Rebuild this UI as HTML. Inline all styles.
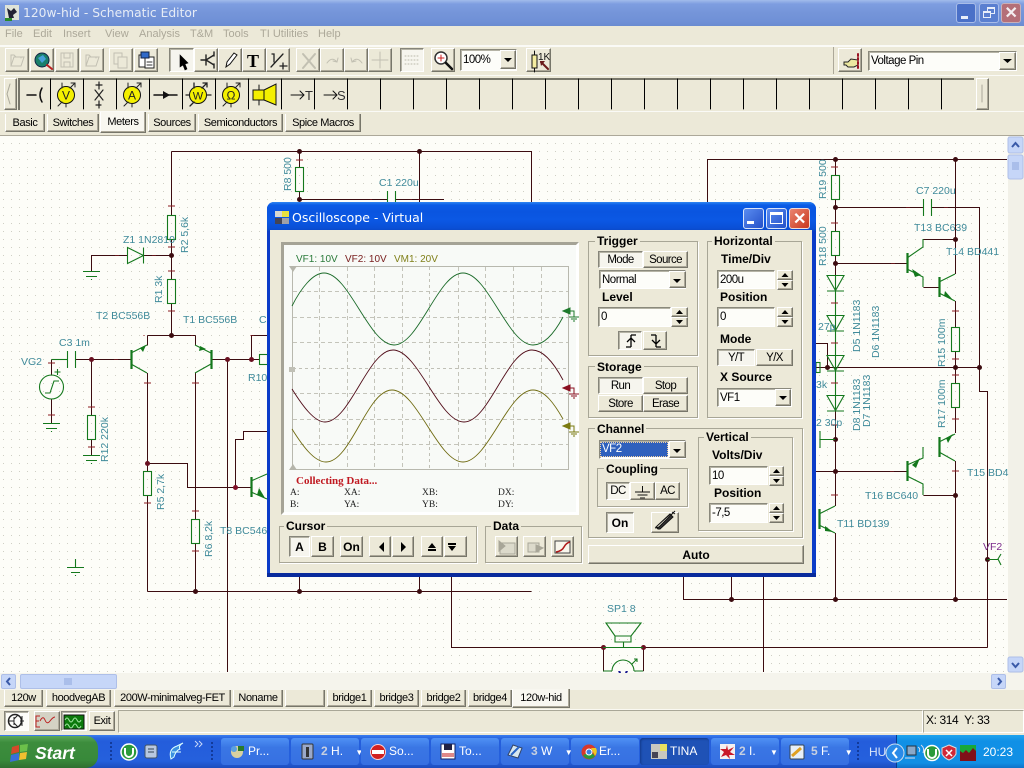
<!DOCTYPE html>
<html><head><meta charset="utf-8"><title>120w-hid - Schematic Editor</title>
<style>
html,body{margin:0;padding:0;width:1024px;height:768px;overflow:hidden;background:#ece9d8}
body{position:relative;font:11px "Liberation Sans",sans-serif;color:#000}
div,svg{position:absolute;box-sizing:border-box}
.t{white-space:nowrap;line-height:13px}
.r,.s,.i,.g{display:flex;align-items:center;justify-content:center;white-space:nowrap;background:#ece9d8;letter-spacing:-.4px}
.r{border:1px solid;border-color:#fff #77766a #77766a #fff;box-shadow:inset -1px -1px 0 #aca899}
.s{border:1px solid;border-color:#86857a #fff #fff #86857a;background:#f6f5ee;box-shadow:inset 1px 1px 0 #b5b3a5}
.i{border:1px solid;border-color:#8a897c #fff #fff #8a897c;background:#fdfdf9;box-shadow:inset 1px 1px 0 #b5b3a5;justify-content:flex-start;padding-left:2px;font-size:11.5px;letter-spacing:-.5px}
.g{border:1px solid #a8a696;box-shadow:1px 1px 0 #fff;background:transparent}
.b{font-weight:bold;font-size:12px;letter-spacing:0}
.tl{background:#ece9d8;padding:0 2px;font-weight:bold;font-size:12px;line-height:13px;white-space:nowrap}
.m{color:#aca899;top:28px}
.w{color:#fff;font-size:12px}
.n{font-size:11.500px;letter-spacing:-.6px}
.task{top:738px;height:27px;background:linear-gradient(#4f91f5,#3a76e4 35%,#3670e2);border-radius:3px;color:#fff;font-size:12px;line-height:27px;white-space:nowrap}
</style></head><body>

<!-- main title bar -->
<div style="left:0;top:0;width:1024px;height:26px;background:linear-gradient(#a2bceb 0,#7e9de0 4px,#7595d9 13px,#6f90d6 22px,#6a8bd0 26px)"></div>
<div class="t" style="left:23px;top:5px;color:#e6ecf6;font:12.3px/16px 'DejaVu Sans',sans-serif">120w-hid - Schematic Editor</div>
<svg style="left:4px;top:4px" width="16" height="18"><rect x="1" y="1" width="14" height="15" fill="#dfe3d8"/><path d="M3 4l4 3 3-3 3 4-4 3 1 3H5l-1-5z" fill="#223"/><rect x="1" y="14" width="7" height="3" fill="#2a8a2a"/></svg>
<div style="left:956px;top:3px;width:20px;height:20px;border:1px solid #a8bce8;border-radius:3px;background:#4a70c8"><div style="left:4px;top:12px;width:7px;height:3px;background:#e8eefa"></div></div>
<div style="left:979px;top:3px;width:20px;height:20px;border:1px solid #a8bce8;border-radius:3px;background:#5a7fd0"><div style="left:7px;top:3px;width:8px;height:7px;border:1px solid #e8eefa;border-top-width:2px"></div><div style="left:3px;top:7px;width:8px;height:7px;border:1px solid #e8eefa;border-top-width:2px;background:#5a7fd0"></div></div>
<div class="r" style="left:1001px;top:3px;width:20px;height:20px;border:1px solid #c8b0b8;border-radius:3px;background:#b46f78;color:#f4eef0;font:bold 16px 'Liberation Sans';box-shadow:none">✕</div>

<!-- menu -->
<div class="t m" style="left:5px">File</div><div class="t m" style="left:33px">Edit</div><div class="t m" style="left:63px">Insert</div><div class="t m" style="left:105px">View</div><div class="t m" style="left:139px">Analysis</div><div class="t m" style="left:190px">T&amp;M</div><div class="t m" style="left:223px">Tools</div><div class="t m" style="left:260px">TI Utilities</div><div class="t m" style="left:318px">Help</div>
<div style="left:0;top:45px;width:1024px;height:2px;background:#fafaf6"></div>

<!-- toolbar 1 -->
<div class="r" style="left:5px;top:48px;width:24px;height:24px"></div><div class="r" style="left:30px;top:48px;width:24px;height:24px"></div><div class="r" style="left:55px;top:48px;width:24px;height:24px"></div><div class="r" style="left:80px;top:48px;width:24px;height:24px"></div>
<div class="r" style="left:109px;top:48px;width:24px;height:24px"></div><div class="r" style="left:134px;top:48px;width:24px;height:24px"></div>
<div class="s" style="left:169px;top:48px;width:25px;height:24px"></div><div class="r" style="left:194px;top:48px;width:24px;height:24px"></div><div class="r" style="left:218px;top:48px;width:24px;height:24px"></div><div class="r" style="left:242px;top:48px;width:24px;height:24px"></div><div class="r" style="left:266px;top:48px;width:24px;height:24px"></div>
<div class="r" style="left:296px;top:48px;width:24px;height:24px"></div><div class="r" style="left:320px;top:48px;width:24px;height:24px"></div><div class="r" style="left:344px;top:48px;width:24px;height:24px"></div><div class="r" style="left:368px;top:48px;width:24px;height:24px"></div>
<div class="s" style="left:400px;top:48px;width:24px;height:24px"></div><div class="r" style="left:431px;top:48px;width:24px;height:24px"></div>
<div class="i" style="left:460px;top:49px;width:57px;height:22px">100%</div><div class="r" style="left:500px;top:50px;width:16px;height:19px"></div>
<div class="r" style="left:526px;top:48px;width:25px;height:24px"></div>
<div style="left:833px;top:47px;width:1px;height:27px;background:#aca899"></div>
<div class="r" style="left:838px;top:48px;width:24px;height:24px"></div>
<div class="i" style="left:868px;top:51px;width:149px;height:20px">Voltage Pin</div><div class="r" style="left:999px;top:52px;width:17px;height:18px"></div>
<div style="left:0;top:75px;width:1024px;height:1px;background:#fafaf6"></div>

<!-- toolbar 2 -->
<div class="r" style="left:4px;top:78px;width:13px;height:32px"></div>
<div style="left:18px;top:78px;width:956px;height:2px;background:#77766a"></div>
<div style="left:18px;top:78px;width:2px;height:32px;background:#77766a"></div>
<div style="left:0;top:111px;width:1024px;height:1px;background:#fafaf6"></div>
<div class="r" style="left:976px;top:78px;width:13px;height:32px"></div>

<svg style="left:0;top:0" width="1024" height="135" fill="none" stroke-linecap="round">
<!-- toolbar 2 dividers -->
<path stroke="#000" d="M50.5 79v30M83.5 79v30M116.5 79v30M149.5 79v30M182.5 79v30M215.5 79v30M248.5 79v30M281.5 79v30M314.5 79v30M347.5 79v30M380.5 79v30M413.5 79v30M446.5 79v30M479.5 79v30M512.5 79v30M545.5 79v30M578.5 79v30M611.5 79v30M644.5 79v30M677.5 79v30M710.5 79v30M743.5 79v30M776.5 79v30M809.5 79v30M842.5 79v30M875.5 79v30M908.5 79v30M941.5 79v30"/>
<path stroke="#aaa89a" d="M10 84l-3 10 3 10M982 85v17"/>
<!-- toolbar 1 icons -->
<g stroke="#c2c0b2"><path d="M11 66l3-9h10l-3 9H11zM11 66v-11h3l2 2h5v1"/><rect x="61" y="53" width="12" height="14"/><path d="M64 53v5h6v-5M64 67v-5h6v5"/><path d="M86 66l3-9h10l-3 9H86zM86 66V55h3l2 2h5v1"/><rect x="114" y="53" width="8" height="11"/><rect x="118" y="57" width="9" height="11" fill="#ece9d8"/><path d="M303 54l12 14M315 54l-12 14" stroke-width="2"/><path d="M327 63q5-7 10-1M333 61l4 1 1-4M362 63q-5-7-10-1M356 61l-4 1-1-4M380 52v16M372 60h16"/></g>
<circle cx="42" cy="60" r="7" fill="#1a7f6a" stroke="#124"/><path d="M38 58l5-3 3 4-4 4z" fill="#46a0d8"/><path d="M47 65l5 4" stroke="#b22" stroke-width="2"/>
<rect x="139" y="55" width="10" height="12" fill="#fff" stroke="#222"/><rect x="145" y="57" width="9" height="11" fill="#fff" stroke="#222"/><path d="M141 52h8v6h-8z" fill="#2f69c8" stroke="#124"/><path d="M147 62h5M147 65h5" stroke="#333"/>
<path d="M179 55l8 8-3 1 2 5-2 1-2-5-3 2z" fill="#000" stroke="#000" stroke-width=".6" transform="translate(1,0)"/>
<path d="M201 60h5M206 55v10M214 55l-8 5 8 5M214 52v4M214 64v4" stroke="#222" stroke-width="1.4"/>
<path d="M226 67l1-5 7-9 3 2-7 9z" stroke="#111" fill="#fff"/>
<text x="247" y="67" fill="#000" stroke="none" font-family="Liberation Serif,serif" font-weight="bold" font-size="18">T</text>
<path d="M271 67l12-13M272 54h2v8M280 66h7M283 63v6" stroke="#222" stroke-width="1.3"/>
<g stroke="#bbb9ab"><path d="M405 56h14M405 60h14M405 64h14" stroke-dasharray="1 2"/></g>
<circle cx="441" cy="58" r="6" fill="#fff" stroke="#333" stroke-width="1.5"/><path d="M438 58h6M441 55v6" stroke="#c22"/><path d="M446 63l6 6" stroke="#111" stroke-width="2.5"/>
<polygon points="504,58 512,58 508,62" fill="#000"/><polygon points="1003,59 1012,59 1007.5,63" fill="#000"/>
<rect x="532" y="55" width="5" height="13" fill="#f4eda0" stroke="#111"/><path d="M534.5 51v4M534.5 68v4" stroke="#111"/>
<text x="538" y="60" fill="#111" stroke="none" font-size="10" font-family="Liberation Sans">1K</text>
<path d="M541 62l7 7" stroke="#6a1a1a" stroke-width="2"/><polygon points="540,61 545,61 541,66" fill="#6a1a1a"/>
<path d="M844 62h4l3-3 7 1v5l-4 2h-6l-2-2h-2z" stroke="#222" fill="#ece8a0"/><path d="M858 54v14" stroke="#912" stroke-width="2" stroke-dasharray="2 2"/>
<!-- meters toolbar -->
<path stroke="#111" stroke-width="1.5" d="M27 95h9M42 88q-4 7 0 14"/>
<circle cx="66" cy="95" r="8.5" fill="#f4f000" stroke="#111"/><path d="M58 106l4-4M70 88l5-5M71 83h4v4M62 83v5M66 104v3" stroke="#222"/>
<text x="66" y="99.500" text-anchor="middle" font-size="12" fill="#222" stroke="none">V</text>
<path d="M99 82v7M95 90l8 10M103 90l-8 10M99 101v7M96 85h6M96 105h5" stroke="#222" stroke-width="1.2"/>
<circle cx="132" cy="95" r="8.5" fill="#f4f000" stroke="#111"/><path d="M124 106l4-4M136 88l5-5M137 83h4v4M128 83v5M132 104v3" stroke="#222"/>
<text x="132" y="99.500" text-anchor="middle" font-size="12" fill="#222" stroke="none">A</text>
<path d="M154 95h23" stroke="#111" stroke-width="1.5"/><polygon points="163,91 170,95 163,99" fill="#111"/>
<circle cx="198" cy="95" r="8.5" fill="#f4f000" stroke="#111"/><path d="M186 95h3M207 95h4M190 106l4-4M202 88l5-5M203 83h4v4M194 83v5" stroke="#222" stroke-width="1.3"/>
<text x="198" y="99.500" text-anchor="middle" font-size="11" fill="#222" stroke="none">W</text>
<circle cx="231" cy="95" r="8.5" fill="#f4f000" stroke="#111"/><path d="M223 106l4-4M235 88l5-5M236 83h4v4M227 83v5M231 104v3" stroke="#222"/>
<text x="231" y="99.500" text-anchor="middle" font-size="12" fill="#222" stroke="none">Ω</text>
<rect x="253" y="90" width="11" height="10" fill="#f4f000" stroke="#111"/><path d="M264 90l12-6v21l-12-5zM259 85v5M259 100v5" fill="#f4f000" stroke="#111"/>
<path d="M291 95h13M300 91l4 4-4 4M324 95h13M333 91l4 4-4 4" stroke="#111"/>
<text x="305" y="100" font-size="13" fill="#333" stroke="none" font-family="Liberation Sans">T</text>
<text x="337" y="100" font-size="13" fill="#333" stroke="none" font-family="Liberation Sans">S</text>
</svg>

<!-- component tabs -->
<div class="r" style="left:5px;top:114px;width:40px;height:18px;border-top:0">Basic</div>
<div class="r" style="left:47px;top:114px;width:52px;height:18px;border-top:0">Switches</div>
<div class="r" style="left:100px;top:112px;width:46px;height:21px;background:#f8f7f0;border-top:0">Meters</div>
<div class="r" style="left:148px;top:114px;width:48px;height:18px;border-top:0">Sources</div>
<div class="r" style="left:198px;top:114px;width:85px;height:18px;border-top:0">Semiconductors</div>
<div class="r" style="left:285px;top:114px;width:76px;height:18px;border-top:0">Spice Macros</div>

<!-- canvas -->
<svg style="left:0;top:135px" width="1024" height="538" viewBox="0 135 1024 538" font-family="Liberation Sans" font-size="10.5" fill="none">
<defs><pattern id="d" x="3" y="7" width="8" height="8" patternUnits="userSpaceOnUse"><rect width="8" height="8" fill="#fdfdf8"/><rect width="1" height="1" fill="#cfcfc4"/></pattern></defs>
<rect x="0" y="135" width="1008" height="538" fill="url(#d)"/>
<rect x="1008" y="135" width="16" height="538" fill="#f2f1e8"/>
<rect x="0" y="135" width="1024" height="1" fill="#aca899"/>
<!-- wires -->
<g stroke="#3c0c10" stroke-width="1">
<path d="M171.5 151.5H531.5V202M299.5 151.5V167M419.5 151.5V202M299.5 192V199.5H387M395 199.5H444"/>
<path d="M171.5 151.5V215M171.5 240V279M171.5 303V335.5M91.5 271V255.5H127M143 255.5H171.5M147.5 335.5H195.5M147.5 335.5v10M195.5 335.5v10"/>
<path d="M147.5 373V471M147.5 496V591.5M195.5 373V519M195.5 543V591.5M147.5 591.5H531.5M299.5 577V591.5M419.5 577V591.5"/>
<path d="M75 359.5H131M91.5 359.5V415M91.5 439V455M51.5 399V423M51.5 359.5V375"/>
<path d="M211 359.5H259M251.5 359.5V335.5H267M227.5 359.5V672M147.5 463.5H187.5V487.5H251M235.5 487.5V439.5H243.5V431.5H267"/>
<path d="M451.5 577V647.5H603M643 647.5H987.5M763.5 577V672M683.5 577V599.5H1007M731.5 577V599.5"/>
<path d="M707.5 202V159.5H1007M835.5 159.5V175M835.5 199V231M835.5 255V275M835.5 263.5H907M835.5 207.5H923M931 207.5H979.5V391.5H987.5V647.5M923.5 239.5H955.5M955.5 159.5V274M955.5 301V327M955.5 351.5V383M923.5 287.5H939M816 367.5H979.5M827.5 367.5V343.5H816M816 471.5H907M835.5 411V506M835.5 533V599.5M923.5 495.5H955.5M955.5 461V599.5M955.5 407V433"/>
<path d="M603.5 647.5V671M643.5 647.5V671"/>
</g>
<!-- nodes -->
<g fill="#3c0c10">
<circle cx="299.5" cy="151.5" r="2.5"/><circle cx="419.5" cy="151.5" r="2.5"/><circle cx="299.5" cy="199.5" r="2.5"/><circle cx="171.5" cy="255.5" r="2.5"/><circle cx="171.5" cy="335.5" r="2.5"/><circle cx="91.5" cy="359.5" r="2.5" fill="#6a1020"/><circle cx="227.5" cy="359.5" r="2.5" fill="#6a1020"/><circle cx="251.5" cy="359.5" r="2.5" fill="#6a1020"/><circle cx="147.5" cy="463.5" r="2.5" fill="#6a1020"/><circle cx="235.5" cy="487.5" r="2.5" fill="#801028"/><circle cx="195.5" cy="591.5" r="2.5"/><circle cx="299.5" cy="591.5" r="2.5"/><circle cx="419.5" cy="591.5" r="2.5"/><circle cx="603.5" cy="647.5" r="2.5" fill="#6a1020"/><circle cx="643.5" cy="647.5" r="2.5" fill="#6a1020"/><circle cx="731.5" cy="599.5" r="2.5"/>
<circle cx="835.5" cy="159.5" r="2.5"/><circle cx="955.5" cy="159.5" r="2.5"/><circle cx="835.5" cy="207.5" r="2.5"/><circle cx="835.5" cy="263.5" r="2.5"/><circle cx="955.5" cy="239.5" r="2.5"/><circle cx="955.5" cy="367.5" r="2.5"/><circle cx="979.5" cy="367.5" r="2.5"/><circle cx="827.5" cy="367.5" r="2.5"/><circle cx="835.5" cy="439.5" r="2.5"/><circle cx="835.5" cy="471.5" r="2.5"/><circle cx="955.5" cy="495.5" r="2.5"/><circle cx="955.5" cy="599.5" r="2.5"/><circle cx="835.5" cy="599.5" r="2.5"/><circle cx="987.5" cy="559.5" r="2.5"/>
</g>
<!-- components -->
<g stroke="#14781c" stroke-width="1.1">
<rect x="295.5" y="167.5" width="8" height="24"/><rect x="167.5" y="215.5" width="8" height="24"/><rect x="167.5" y="279.5" width="8" height="24"/><rect x="87.5" y="415.5" width="8" height="24"/><rect x="143.5" y="471.5" width="8" height="24"/><rect x="191.5" y="519.5" width="8" height="24"/>
<rect x="831.5" y="175.5" width="8" height="24"/><rect x="831.5" y="231.5" width="8" height="24"/><rect x="951.5" y="327.5" width="8" height="24"/><rect x="951.5" y="383.5" width="8" height="24"/><rect x="816" y="362.5" width="4" height="10"/><rect x="259.5" y="354.5" width="8" height="10"/>
<path d="M387.5 191v11M395.5 191v11M67.5 351v17M75.5 351v17M923.5 199v17M931.5 199v17"/>
<path d="M51.5 359.5H67"/>
<path d="M127.5 247.5V263.5L143.5 255.5ZM143.5 247.5V263.5"/>
<path d="M83 271.5h17M86 276.5h11M91.5 279v1M43 423.5h17M46 428.5h11M51.5 431v1M83 455.5h17M86 460.5h11M91.5 463v1M67 567.5h17M71 572.5h9M75.5 559v8M75.5 575v1"/>
<circle cx="51.5" cy="387" r="12"/><path d="M45 393h5l4-12h5"/><path d="M57.500 369v6M54.500 372h6"/>
<path d="M131.5 350v19M211.5 350v19M251.5 477v20M907.5 253v20M939.5 277v20M939.5 437v20M907.5 461v20M819.5 509v20" stroke-width="2.2"/>
<path d="M131 353l16-8M131 364l16 9M211 353l-16-8M211 364l-16 9M251 481l16-7M251 492l16 7M907 258l16-11v-8M907 269l16 8v10M939 282l16-8M939 293l16 8M939 442l16-8M939 452l16 9M923 447v11l-16 7M907 476l16 8v11M819 514l16-8M819 525l16 8"/>
<path d="M827 275.5h17l-8.5 15zM827 291h17M827 315.5h17l-8.5 15zM827 331h17M827 355.5h17l-8.5 15zM827 371h17M827 395.5h17l-8.5 15zM827 411h17"/>
<path d="M835.5 275v135M820 439.5h15M820 431v17"/>
<path d="M606 623h35l-10 13h-16zM615 636h16v6h-16zM623.5 642v5M603 647.5h40M603 671h9M634 671h9M612 671a11 11 0 0 1 22 0M632 664l5-5M634 659h3v3M987.5 559.5H998M1001 554l-3 5 3 6"/>
</g>
<g fill="#14781c"><polygon points="140,348 146,345 143,352"/><polygon points="200,346 206,349 199,351"/><polygon points="257,495 265,498 259,488"/><polygon points="912,269 921,275 915,277"/><polygon points="945,291 953,300 944,296"/><polygon points="912,465 920,458 916,468"/><polygon points="946,438 953,434 948,443"/><polygon points="825,526 833,532 825,531"/></g>
<!-- ticks -->
<g stroke="#8a1a20" stroke-width="1"><path d="M116 255v1M118 255v1M153 255v1M155 255v1M115 359v1M117 359v1M168 206h7M168 247h7M168 271h7M168 311h7M88 407h7M88 447h7M144 503h7M192 511h7M192 551h7M144 335v1M192 335v1M296 160h7M419 199v1M371 199v1M411 199v1M48 363h7M48 415h7M144 383h7M192 383h7M831 167h7M831 223h7M831 303h7M831 343h7M831 383h7M831 425h7M831 495h7M952 359h7M952 375h7M952 419h7M952 471h7M952 311h7M892 263v1M894 263v1M891 471v1M893 471v1M907 207v1M909 207v1M945 207v1M947 207v1M251 335v1M253 335v1M268 431v1"/></g>
<!-- labels -->
<g fill="#3f8a9a" stroke="none">
<text x="123" y="243">Z1 1N2810</text><text x="96" y="319">T2 BC556B</text><text x="183" y="323">T1 BC556B</text><text x="59" y="346">C3 1m</text><text x="21" y="365">VG2</text><text x="248" y="381">R10</text><text x="259" y="323">C</text><text x="220" y="534">T8 BC546</text><text x="379" y="186">C1 220u</text><text x="607" y="612">SP1 8</text>
<text x="916" y="194">C7 220u</text><text x="914" y="231">T13 BC639</text><text x="946" y="255">T14 BD441</text><text x="967" y="476">T15 BD4</text><text x="865" y="499">T16 BC640</text><text x="837" y="527">T11 BD139</text><text x="818" y="330">27p</text><text x="816" y="388">3k</text><text x="816" y="426">2 30p</text>
<text transform="translate(188 253) rotate(-90)">R2 5,6k</text><text transform="translate(162 303) rotate(-90)">R1 3k</text><text transform="translate(108 462) rotate(-90)">R12 220k</text><text transform="translate(164 510) rotate(-90)">R5 2,7k</text><text transform="translate(212 557) rotate(-90)">R6 8,2k</text><text transform="translate(291 191) rotate(-90)">R8 500</text>
<text transform="translate(826 199) rotate(-90)">R19 500</text><text transform="translate(826 266) rotate(-90)">R18 500</text><text transform="translate(860 352) rotate(-90)">D5 1N1183</text><text transform="translate(879 358) rotate(-90)">D6 1N1183</text><text transform="translate(860 431) rotate(-90)">D8 1N1183</text><text transform="translate(870 427) rotate(-90)">D7 1N1183</text><text transform="translate(945 367) rotate(-90)">R15 100m</text><text transform="translate(945 428) rotate(-90)">R17 100m</text>
</g>
<text x="983" y="550" fill="#7a2a8a">VF2</text>
<text x="623" y="681" text-anchor="middle" fill="#1a1a90" font-weight="bold" font-size="15">V</text>
<!-- scrollbar -->
<rect x="1008" y="137" width="15" height="16" rx="2" fill="#c6d6f8" stroke="#aebfe8"/><path d="M1012 147l3.5-4 3.5 4" stroke="#3a5aa8" stroke-width="2"/>
<rect x="1008" y="155" width="15" height="24" rx="2" fill="#c6d6f8" stroke="#aebfe8"/><path d="M1012 163h7M1012 165h7M1012 167h7M1012 169h7" stroke="#8ea6dc"/>
<rect x="1008" y="657" width="15" height="15" rx="2" fill="#c6d6f8" stroke="#aebfe8"/><path d="M1012 663l3.5 4 3.5-4" stroke="#3a5aa8" stroke-width="2"/>
</svg>

<!-- horizontal scrollbar -->
<div style="left:0;top:673px;width:1024px;height:17px;background:#f5f4ec"></div>
<div style="left:1px;top:674px;width:15px;height:15px;background:#c6d6f8;border:1px solid #aebfe8;border-radius:2px"></div>
<div style="left:20px;top:674px;width:97px;height:15px;background:#c6d6f8;border:1px solid #aebfe8;border-radius:2px"></div>
<div style="left:991px;top:674px;width:15px;height:15px;background:#c6d6f8;border:1px solid #aebfe8;border-radius:2px"></div>
<svg style="left:0;top:673px" width="1024" height="17" fill="none"><path d="M10 5l-3 3.5 3 3.5M998 5l3 3.5-3 3.5" stroke="#3a5aa8" stroke-width="2"/><path d="M65 5v7M67 5v7M69 5v7M71 5v7" stroke="#8ea6dc"/></svg>

<!-- document tabs -->
<div class="r" style="left:4px;top:690px;width:39px;height:17px;border-top:0">120w</div>
<div class="r" style="left:46px;top:690px;width:65px;height:17px;border-top:0">hoodvegAB</div>
<div class="r" style="left:114px;top:690px;width:117px;height:17px;border-top:0">200W-minimalveg-FET</div>
<div class="r" style="left:233px;top:690px;width:50px;height:17px;border-top:0">Noname</div>
<div class="r" style="left:285px;top:690px;width:40px;height:17px;border-top:0"></div>
<div class="r" style="left:327px;top:690px;width:45px;height:17px;border-top:0">bridge1</div>
<div class="r" style="left:374px;top:690px;width:45px;height:17px;border-top:0">bridge3</div>
<div class="r" style="left:421px;top:690px;width:45px;height:17px;border-top:0">bridge2</div>
<div class="r" style="left:468px;top:690px;width:44px;height:17px;border-top:0">bridge4</div>
<div class="r" style="left:512px;top:689px;width:58px;height:19px;border-top:0;background:#f8f7f0">120w-hid</div>
<div style="left:0;top:709px;width:1024px;height:1px;background:#faf9f2"></div>

<!-- bottom bar -->
<div class="s" style="left:4px;top:711px;width:25px;height:20px;background:#fdfdf9"></div>
<div class="r" style="left:34px;top:711px;width:26px;height:20px;background:#d4d2c4"></div>
<div class="s" style="left:61px;top:711px;width:26px;height:20px;background:#fdfdf9"></div>
<div class="r" style="left:89px;top:711px;width:26px;height:20px">Exit</div>
<div style="left:118px;top:710px;width:805px;height:23px;border:1px solid;border-color:#a9a797 #fff #fff #a9a797"></div>
<div style="left:923px;top:710px;width:101px;height:23px;border:1px solid;border-color:#a9a797 #fff #fff #a9a797"></div>
<div class="t" style="left:926px;top:714px;font-size:12px;letter-spacing:-.4px">X: 314 &nbsp;Y: 33</div>
<svg style="left:0;top:706px" width="120" height="30" fill="none">
<circle cx="15" cy="15" r="6.5" stroke="#222" stroke-width="1.5"/><path d="M9 15h5M14 11v8M14 13l4-4M14 17l4 4M22 10v10M20 15h4" stroke="#222"/>
<path d="M40 10h-4v11h4M36 15h3M40 15q3-6 5-1t5 1 5-4" stroke="#b22"/>
<rect x="64" y="9" width="20" height="14" fill="#0c7a0c" stroke="#111"/><path d="M65 14q2-4 4 0t4 0 4 0 4 0M65 20q2-4 4 0t4 0 4 0 4 0" stroke="#9ee29e"/>
</svg>

<!-- taskbar -->
<div style="left:0;top:735px;width:1024px;height:33px;background:linear-gradient(#3a7ef0 0,#2a66e0 3px,#245ddb 6px,#2560dd 26px,#1d4dbd 33px)"></div>
<div style="left:896px;top:735px;width:128px;height:33px;background:linear-gradient(#20a4ee,#1090e6 6px,#118fe4 28px,#0f72c8);border-left:1px solid #083a90"></div>
<div style="left:0;top:736px;width:98px;height:32px;background:linear-gradient(#5aa85a,#3d8d3d 20%,#38893a 75%,#2f6f30);border-radius:0 12px 12px 0"></div>
<div class="t" style="left:35px;top:743px;color:#fff;font:italic bold 17.500px/20px 'Liberation Sans'">Start</div>
<svg style="left:0;top:735px" width="1024" height="33" fill="none">
<path d="M12 12l7-2v7l-8 2z" fill="#d64a2a"/><path d="M20 10l8-1-1 7-7 1z" fill="#6cc04a"/><path d="M11 20l8-2v7l-9 2z" fill="#3a6fd8"/><path d="M20 18l7-1-1 7-7 1z" fill="#f0c030"/>
<path d="M111 7v20M212 7v20M858 7v20" stroke="#123a9a" stroke-width="2" stroke-dasharray="2 2"/>
<circle cx="129" cy="17" r="8" fill="#2a9a3a" stroke="#fff" stroke-width="1.5"/><path d="M125 13v5a4 4 0 0 0 8 0v-5" stroke="#fff" stroke-width="2"/>
<rect x="145" y="10" width="12" height="13" rx="2" fill="#b8c8e0" stroke="#456"/><path d="M148 14h6M148 17h6" stroke="#345"/>
<path d="M171 24q-3-10 6-13 4-2 6-3-5 3-3 6l-2 1q-3 3-4 7zM172 17h9" stroke="#dff" fill="#3a90e0"/>
<path d="M195 6l3 3-3 3M199 6l3 3-3 3" stroke="#c8d8f8"/>
<circle cx="895" cy="18" r="9" fill="#2a8ae8" stroke="#cde" stroke-width="1"/><path d="M897 13l-4 5 4 5" stroke="#fff" stroke-width="2"/>
<rect x="907" y="11" width="9" height="9" fill="#8aa8c8" stroke="#234"/><path d="M905 23h10M918 12q3 2 1 5M921 10q4 3 2 8" stroke="#dde"/>
<circle cx="932" cy="18" r="7.5" fill="#2a9a3a" stroke="#fff" stroke-width="1.5"/><path d="M928 14v5a4 4 0 0 0 8 0v-5" stroke="#fff" stroke-width="2"/>
<path d="M949 10l7 3v6q-2 4-7 6-5-2-7-6v-6z" fill="#d02838" stroke="#ddd"/><path d="M946 15l6 6M952 15l-6 6" stroke="#fff" stroke-width="1.5"/>
<rect x="960" y="10" width="16" height="16" fill="#801018"/><path d="M960 10h16v6l-3-3-4 5-3-3-3 3-3-2z" fill="#18a838"/>
</svg>
<div class="task" style="left:221px;width:68px;padding-left:27px">Pr...</div>
<div class="task" style="left:291px;width:68px;padding-left:30px"><b style="color:#c8d0e0">2</b> H. <span style="font-size:8px;margin-left:9px">▼</span></div>
<div class="task" style="left:361px;width:68px;padding-left:28px">So...</div>
<div class="task" style="left:431px;width:68px;padding-left:28px">To...</div>
<div class="task" style="left:501px;width:68px;padding-left:30px"><b style="color:#c8d0e0">3</b> W <span style="font-size:8px;margin-left:9px">▼</span></div>
<div class="task" style="left:571px;width:68px;padding-left:28px">Er...</div>
<div class="task" style="left:640px;width:69px;padding-left:30px;background:#1f52b6;box-shadow:inset 1px 1px 2px #123a8a">TINA</div>
<div class="task" style="left:711px;width:68px;padding-left:28px"><b style="color:#c8d0e0">2</b> I. <span style="font-size:8px;margin-left:11px">▼</span></div>
<div class="task" style="left:781px;width:68px;padding-left:30px"><b style="color:#c8d0e0">5</b> F. <span style="font-size:8px;margin-left:11px">▼</span></div>
<svg style="left:0;top:735px;z-index:5" width="1024" height="33" fill="none">
<circle cx="237" cy="17" r="6" fill="#d8d0a0"/><rect x="238" y="11" width="6" height="5" fill="#2a7a2a"/><circle cx="234" cy="14" r="3" fill="#5aa0e0"/>
<rect x="302" y="9" width="11" height="15" rx="1" fill="#9aa8c8" stroke="#333"/><path d="M306 12h3v10h-3z" fill="#333"/>
<circle cx="378" cy="17" r="7.5" fill="#d02020" stroke="#ffd0d0"/><rect x="372" y="15" width="12" height="4" fill="#fff"/>
<rect x="441" y="9" width="14" height="15" fill="#fff" stroke="#126"/><rect x="444" y="9" width="8" height="6" fill="#224"/><rect x="442" y="18" width="12" height="4" fill="#d88"/>
<path d="M513 10l9 3-4 10-10-3z" fill="#d8e8f0" stroke="#346"/><path d="M511 20l8-8" stroke="#2a66c8" stroke-width="2"/>
<circle cx="589" cy="17" r="7.5" fill="#d8382a"/><path d="M583 20a7 7 0 0 0 12 1l-4-4z" fill="#2a9a3a"/><path d="M595 21a7 7 0 0 0 1-8h-5z" fill="#f0c820"/><circle cx="589" cy="17" r="3" fill="#3a80e0" stroke="#fff"/>
<rect x="651" y="9" width="16" height="15" fill="#c8c8c0"/><rect x="660" y="9" width="7" height="7" fill="#e8e060"/><rect x="652" y="17" width="6" height="6" fill="#445"/>
<rect x="720" y="9" width="15" height="15" fill="#f4f0f0"/><path d="M727 10l1 5 6-3-4 5 5 3-6 0 1 4-4-4-5 2 3-5-4-3 6 0z" fill="#c81828"/>
<rect x="790" y="10" width="14" height="14" rx="1" fill="#e8f0f8" stroke="#345"/><path d="M792 21l9-8" stroke="#e0a020" stroke-width="3"/>
</svg>
<div class="t w" style="left:869px;top:746px;color:#d8e4f8">HU</div>
<div class="t w" style="left:983px;top:746px">20:23</div>

<!-- Oscilloscope window -->
<div style="left:267px;top:202px;width:549px;height:375px;background:#0b3cc8;border-radius:7px 7px 0 0;border-bottom:4px solid #082a9c;z-index:10">
 <div style="left:0;top:0;width:549px;height:29px;background:linear-gradient(#2f86f2 0,#0a5ce6 3px,#0a55e0 10px,#0b58e4 18px,#0a4fd6 26px,#0a46c4 29px);border-radius:7px 7px 0 0"></div>
 <div style="left:3px;top:28px;width:542px;height:343px;background:#ece9d8"></div>
</div>
<div style="left:0;top:0;width:1024px;height:768px;z-index:11">
<div class="t" style="left:292px;top:210px;color:#fff;font:12.5px/16px 'DejaVu Sans',sans-serif">Oscilloscope - Virtual</div>
<div style="left:743px;top:208px;width:21px;height:21px;border:1px solid #d8e4fa;border-radius:3px;background:linear-gradient(135deg,#5a8cf0,#2450c8)"></div>
<div style="left:747px;top:221px;width:7px;height:3px;background:#fff"></div>
<div style="left:766px;top:208px;width:21px;height:21px;border:1px solid #d8e4fa;border-radius:3px;background:linear-gradient(135deg,#5a8cf0,#2450c8)"></div>
<div style="left:770px;top:212px;width:13px;height:12px;border:1px solid #fff;border-top-width:3px"></div>
<div class="r" style="left:789px;top:208px;width:21px;height:21px;border:1px solid #f0dcd8;border-radius:3px;background:linear-gradient(135deg,#ea8470,#c8371e);color:#fff;font:bold 16px 'Liberation Sans';box-shadow:none">✕</div>

<!-- screen -->
<div style="left:281px;top:242px;width:298px;height:273px;background:#f8faf7;border:3px solid;border-color:#a5a396 #fff #fff #a5a396"></div>
<svg style="left:0;top:0" width="1024" height="768" fill="none">
<rect x="292.5" y="266.5" width="276" height="203" stroke="#b8b8ae"/>
<path stroke="#c4c4ba" stroke-dasharray="4 3" d="M319.5 267v202M347.5 267v202M374.5 267v202M402.5 267v202M458.5 267v202M485.5 267v202M513.5 267v202M541.5 267v202M293 291.5h275M293 317.5h275M293 342.5h275M293 393.5h275M293 419.5h275M293 444.5h275"/>
<path stroke="#c0c0b6" d="M293 368.5h275M429.5 267v202" stroke-dasharray="3 3"/>
<polygon points="289,266 297,266 293,272" fill="#b5b5ab"/><polygon points="289,470 297,470 293,464" fill="#b5b5ab"/><rect x="289" y="367" width="6" height="5" fill="#c0c0b6"/>
<path stroke="#1a6a28" stroke-width=".9" d="M292 306C301 288 313 273 324 273C349 273 369 345 394 345C419 345 438 273 463 273C488 273 508 345 533 345C545 345 555 332 563 317"/>
<path stroke="#500c18" stroke-width=".9" d="M292 389C302 405 314 422 325 422C350 422 368 350 393 350C418 350 439 422 464 422C489 422 507 350 532 350C544 350 555 365 563 380"/>
<path stroke="#6f6a10" stroke-width=".9" d="M292 429C302 445 314 462 326 462C351 462 367 390 392 390C417 390 438 462 463 462C488 462 508 390 533 390C545 390 555 405 563 419"/>
<g stroke="#1f7a2c"><polygon points="563,311 570,308 570,314" fill="#1f7a2c"/><path d="M569 311h5v6M569 317h10M571 319h6M573 321h2"/></g>
<g stroke="#8a1020"><polygon points="563,388 570,385 570,391" fill="#8a1020"/><path d="M569 388h5v6M569 394h10M571 396h6M573 398h2"/></g>
<g stroke="#7a7a10"><polygon points="563,426 570,423 570,429" fill="#7a7a10"/><path d="M569 426h5v6M569 432h10M571 434h6M573 436h2"/></g>
<g font-family="Liberation Sans" font-size="10" stroke="none"><text x="296" y="262" fill="#2a7a3a">VF1: 10V</text><text x="345" y="262" fill="#7a2020">VF2: 10V</text><text x="394" y="262" fill="#80801a">VM1: 20V</text></g>
<text x="296" y="484" fill="#c01820" font-family="Liberation Serif" font-weight="bold" font-size="11">Collecting Data...</text>
<g fill="#222" font-family="Liberation Serif" font-size="9.5"><text x="290" y="495">A:</text><text x="344" y="495">XA:</text><text x="422" y="495">XB:</text><text x="498" y="495">DX:</text><text x="290" y="507">B:</text><text x="344" y="507">YA:</text><text x="422" y="507">YB:</text><text x="498" y="507">DY:</text></g>
</svg>

<!-- groups -->
<div class="g" style="left:279px;top:526px;width:198px;height:37px"></div><div class="t tl" style="left:284px;top:520px">Cursor</div>
<div class="s b" style="left:289px;top:536px;width:21px;height:21px">A</div><div class="r b" style="left:311px;top:536px;width:23px;height:21px">B</div><div class="r b" style="left:340px;top:536px;width:23px;height:21px">On</div><div class="r" style="left:369px;top:536px;width:22px;height:21px"></div><div class="r" style="left:392px;top:536px;width:22px;height:21px"></div><div class="r" style="left:421px;top:536px;width:22px;height:21px"></div><div class="r" style="left:444px;top:536px;width:23px;height:21px"></div>
<div class="g" style="left:485px;top:526px;width:97px;height:37px"></div><div class="t tl" style="left:491px;top:520px">Data</div>
<div class="r" style="left:495px;top:536px;width:23px;height:21px"></div><div class="r" style="left:523px;top:536px;width:23px;height:21px"></div><div class="r" style="left:551px;top:536px;width:23px;height:21px"></div>

<div class="g" style="left:588px;top:241px;width:110px;height:115px"></div><div class="t tl" style="left:595px;top:235px">Trigger</div>
<div class="s n" style="left:598px;top:251px;width:45px;height:17px">Mode</div><div class="r n" style="left:643px;top:251px;width:45px;height:17px">Source</div>
<div class="i" style="left:599px;top:270px;width:87px;height:19px">Normal</div><div class="r" style="left:669px;top:271px;width:17px;height:17px"></div>
<div class="t b" style="left:602px;top:291px">Level</div>
<div class="i" style="left:598px;top:307px;width:73px;height:20px">0</div><div class="r" style="left:671px;top:307px;width:17px;height:10px"></div><div class="r" style="left:671px;top:317px;width:17px;height:10px"></div>
<div class="s" style="left:618px;top:331px;width:24px;height:19px"></div><div class="r" style="left:643px;top:331px;width:24px;height:19px"></div>

<div class="g" style="left:588px;top:366px;width:110px;height:52px"></div><div class="t tl" style="left:595px;top:361px">Storage</div>
<div class="s n" style="left:598px;top:377px;width:45px;height:17px">Run</div><div class="r n" style="left:643px;top:377px;width:45px;height:17px">Stop</div><div class="r n" style="left:598px;top:395px;width:45px;height:17px">Store</div><div class="r n" style="left:643px;top:395px;width:45px;height:17px">Erase</div>

<div class="g" style="left:707px;top:241px;width:95px;height:177px"></div><div class="t tl" style="left:712px;top:235px">Horizontal</div>
<div class="t b" style="left:721px;top:253px">Time/Div</div>
<div class="i" style="left:717px;top:270px;width:58px;height:19px">200u</div><div class="r" style="left:777px;top:270px;width:16px;height:10px"></div><div class="r" style="left:777px;top:280px;width:16px;height:10px"></div>
<div class="t b" style="left:720px;top:291px">Position</div>
<div class="i" style="left:717px;top:307px;width:58px;height:20px">0</div><div class="r" style="left:777px;top:307px;width:16px;height:10px"></div><div class="r" style="left:777px;top:317px;width:16px;height:10px"></div>
<div class="t b" style="left:720px;top:333px">Mode</div>
<div class="s n" style="left:717px;top:349px;width:38px;height:17px">Y/T</div><div class="r n" style="left:756px;top:349px;width:37px;height:17px">Y/X</div>
<div class="t b" style="left:720px;top:371px">X Source</div>
<div class="i" style="left:717px;top:388px;width:75px;height:19px">VF1</div><div class="r" style="left:775px;top:389px;width:16px;height:17px"></div>

<div class="g" style="left:588px;top:428px;width:215px;height:110px"></div><div class="t tl" style="left:595px;top:423px">Channel</div>
<div class="i" style="left:599px;top:440px;width:87px;height:19px"></div><div style="left:600px;top:442px;width:68px;height:15px;background:#2f60bd;outline:1px dotted #f2d0a0;outline-offset:-1px;color:#fff;font-size:11.5px;letter-spacing:-.5px;line-height:15px;padding-left:2px">VF2</div><div class="r" style="left:669px;top:441px;width:17px;height:17px"></div>
<div class="g" style="left:597px;top:468px;width:91px;height:39px"></div><div class="t tl" style="left:604px;top:463px">Coupling</div>
<div class="s n" style="left:606px;top:482px;width:24px;height:18px">DC</div><div class="r" style="left:630px;top:482px;width:25px;height:18px"></div><div class="r n" style="left:655px;top:482px;width:25px;height:18px">AC</div>
<div class="s b" style="left:606px;top:512px;width:28px;height:21px">On</div><div class="r" style="left:651px;top:512px;width:28px;height:21px"></div>
<div class="g" style="left:698px;top:437px;width:95px;height:94px"></div><div class="t tl" style="left:704px;top:431px">Vertical</div>
<div class="t b" style="left:712px;top:449px">Volts/Div</div>
<div class="i" style="left:709px;top:466px;width:59px;height:19px">10</div><div class="r" style="left:769px;top:466px;width:15px;height:10px"></div><div class="r" style="left:769px;top:476px;width:15px;height:10px"></div>
<div class="t b" style="left:714px;top:487px">Position</div>
<div class="i" style="left:709px;top:503px;width:59px;height:20px">-7,5</div><div class="r" style="left:769px;top:503px;width:15px;height:10px"></div><div class="r" style="left:769px;top:513px;width:15px;height:10px"></div>
<div class="r b" style="left:588px;top:545px;width:216px;height:19px">Auto</div>

<!-- small icons -->
<svg style="left:0;top:0" width="1024" height="768" fill="none">
<g fill="#000">
<polygon points="673,279 681,279 677,283"/><polygon points="779,396 787,396 783,400"/><polygon points="673,449 681,449 677,453"/>
<polygon points="679.5,310 676,314 683,314"/><polygon points="676,320 683,320 679.5,324"/>
<polygon points="785,273 781.5,277 788.5,277"/><polygon points="781.5,283 788.5,283 785,287"/>
<polygon points="785,310 781.5,314 788.5,314"/><polygon points="781.5,320 788.5,320 785,324"/>
<polygon points="776.5,469 773,473 780,473"/><polygon points="773,479 780,479 776.5,483"/>
<polygon points="776.5,506 773,510 780,510"/><polygon points="773,516 780,516 776.5,520"/>
<polygon points="384,542 384,552 379,547"/><polygon points="401,542 401,552 406,547"/>
<polygon points="432,543 428,548 436,548"/><rect x="428" y="549" width="8" height="2"/><polygon points="452,551 448,546 456,546"/><rect x="448" y="543" width="8" height="2"/>
</g>
<path d="M631 335v12M626 347h5M631 335h5M627 342l4-4 4 4M656 335v12M651 335h5M656 347h5M652 340l4 4 4-4" stroke="#000" stroke-width="1.3"/>
<path d="M642.5 486v6M635 492h15M637.5 495h10M640 498h5" stroke="#111"/>
<path d="M655 528l4-1 13-13 3-3M658 529l-2-2 14-13 3 3-13 12z" stroke="#111" fill="#333"/>
<path d="M672 512l3 2" stroke="#111"/>
<g stroke="#a8a698"><rect x="500" y="543" width="15" height="11" fill="#dcdacb"/><polygon points="499,541 505,546 499,551" fill="#a8a698"/><rect x="528" y="543" width="11" height="9" fill="#dcdacb"/><polygon points="536,545 543,548 536,552" fill="#a8a698"/></g>
<rect x="555" y="541" width="15" height="12" fill="#f8f6ec" stroke="#444"/><path d="M556 552q6-1 8-5t6-5" stroke="#b01818" stroke-width="1.5"/>
<rect x="275" y="211" width="7" height="6" fill="#d8d8d0"/><rect x="282" y="211" width="7" height="6" fill="#e8e040"/><rect x="275" y="218" width="7" height="6" fill="#445"/><rect x="282" y="218" width="7" height="6" fill="#a0a0a8"/>
</svg>
</div>
</body></html>
